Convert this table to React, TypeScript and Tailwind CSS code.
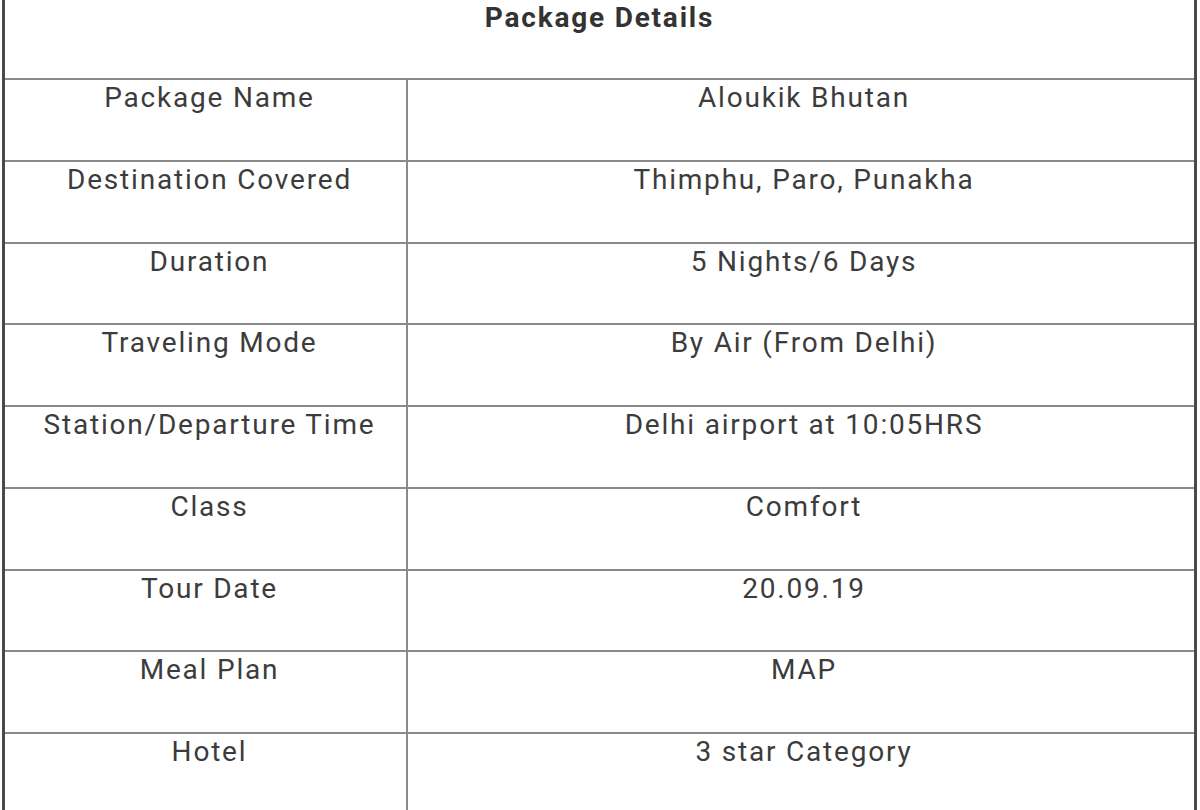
import React from "react";

const rows: [string, string][] = [
  ["Package Name", "Aloukik Bhutan"],
  ["Destination Covered", "Thimphu, Paro, Punakha"],
  ["Duration", "5 Nights/6 Days"],
  ["Traveling Mode", "By Air (From Delhi)"],
  ["Station/Departure Time", "Delhi airport at 10:05HRS"],
  ["Class", "Comfort"],
  ["Tour Date", "20.09.19"],
  ["Meal Plan", "MAP"],
  ["Hotel", "3 star Category"],
];

export default function App() {
  return (
    <div className="w-[1200px] h-[810px] overflow-hidden bg-white" style={{ fontFamily: "Roboto, 'Liberation Sans', sans-serif" }}>
      <div className="ml-[2px] w-[1195px] border-x-[3px] border-[#4a4a4a] text-[#3c3c3c] text-[28px] leading-[36px] tracking-[1.8px]">
        <div className="h-[80px] border-b-2 border-[#8a8a8a] text-center font-bold text-[#333]">
          Package Details
        </div>
        {rows.map(([k, v]) => (
          <div key={k} className="flex h-[81.75px] border-b-2 border-[#8a8a8a]">
            <div className="w-[403px] shrink-0 border-r-2 border-[#8a8a8a] pl-[8px] text-center">{k}</div>
            <div className="flex-1 pl-[6px] text-center">{v}</div>
          </div>
        ))}
      </div>
    </div>
  );
}
